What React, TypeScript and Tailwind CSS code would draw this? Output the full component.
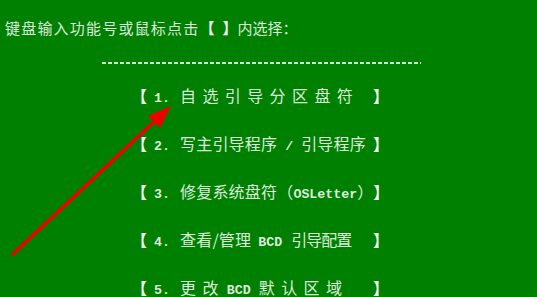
const cjk = "font-['Noto_Sans_CJK_SC',sans-serif]"
const mono = "font-['Liberation_Mono',monospace] text-[13.3px] font-bold"

function Row({ num, children }: { num: string; children: React.ReactNode }) {
  return (
    <div className="flex h-[18px] w-[258px] items-baseline justify-between whitespace-nowrap leading-[18px]">
      <div className="flex items-baseline">
        <span className="w-[16px] text-[16px] font-bold text-[#f4f8f4]">【</span>
        <span className={`ml-[7px] w-[16px] ${mono}`}>{num}</span>
        <div className="ml-[10px] flex items-baseline text-[16px]">{children}</div>
      </div>
      <span className="w-[16px] text-[16px] font-bold text-[#f4f8f4]">】</span>
    </div>
  )
}

export default function App() {
  return (
    <div className={`relative h-[297px] w-[537px] overflow-hidden bg-[#008000] text-[#dcebdc] ${cjk}`}>
      <div className="flex items-baseline whitespace-nowrap pl-[5px] pt-[19px] text-[15px] leading-[18px]">
        <span className="tracking-[1.2px]">键盘输入功能号或鼠标点击</span>
        <span className="font-bold text-[#f4f8f4]">【</span>
        <span className="ml-[8px] font-bold text-[#f4f8f4]">】</span>
        <span>内选择：</span>
      </div>
      <div className="ml-[102px] mt-[25px] h-[2px] w-[319px] bg-[repeating-linear-gradient(90deg,#d8e6d8_0_4px,transparent_4px_6px)]" />
      <div className="ml-[131px] mt-[22px] flex flex-col gap-[30px]">
        <Row num="1.">
          <span className="tracking-[6.4px]">自选引导分区盘符</span>
        </Row>
        <Row num="2.">
          <span className="tracking-[0.2px]">写主引导程序</span>
          <span className={`whitespace-pre ${mono}`}> / </span>
          <span className="tracking-[0.2px]">引导程序</span>
        </Row>
        <Row num="3.">
          <span className="tracking-[0.2px]">修复系统盘符（</span>
          <span className={mono}>OSLetter</span>
          <span>）</span>
        </Row>
        <Row num="4.">
          <span className="tracking-[0.2px]">查看/管理</span>
          <span className={`ml-[7px] ${mono}`}>BCD</span>
          <span className="ml-[9px] tracking-[-1px]">引导配置</span>
        </Row>
        <Row num="5.">
          <span className="tracking-[6.4px]">更改</span>
          <span className={`ml-[2px] ${mono}`}>BCD</span>
          <span className="ml-[8px] tracking-[6.4px]">默认区域</span>
        </Row>
      </div>
      <svg className="absolute left-0 top-0" width="537" height="297" viewBox="0 0 537 297">
        <line x1="13" y1="254" x2="158" y2="118" stroke="#f00000" strokeWidth="3.5" strokeLinecap="round" />
        <polygon points="171,106 148,116 160,128" fill="#f00000" />
      </svg>
    </div>
  )
}
